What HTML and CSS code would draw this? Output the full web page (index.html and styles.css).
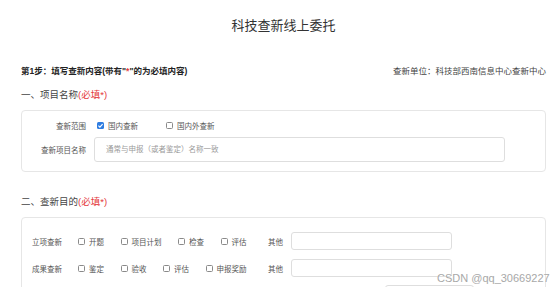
FILE: index.html
```html
<!DOCTYPE html>
<html lang="zh-CN">
<head>
  <meta charset="UTF-8" />
  <meta name="viewport" content="width=device-width, initial-scale=1.0"/>
  <title>科技查新线上委托</title>
  <link rel="stylesheet" href="styles.css">
</head>
<body>
  <div class="page">
    <h1>科技查新线上委托</h1>

    <div class="step">
      <span class="step-title">第1步：填写查新内容(带有"<em>*</em>"的为必填内容)</span>
      <span class="unit">查新单位：科技部西南信息中心查新中心</span>
    </div>

    <h2>一、项目名称<em>(必填*)</em></h2>
    <div class="card card-name">
      <div class="row">
        <span class="label">查新范围</span>
        <div class="choices">
          <label class="opt"><span class="box checked"><svg viewBox="0 0 8 8" width="7" height="7"><path d="M1.6 4.2 L3.3 5.8 L6.4 2.4" fill="none" stroke="#fff" stroke-width="1.3"/></svg></span>国内查新</label>
          <label class="opt"><span class="box"></span>国内外查新</label>
        </div>
      </div>
      <div class="row">
        <span class="label">查新项目名称</span>
        <input class="field wide" type="text" placeholder="通常与申报（或者鉴定）名称一致" />
      </div>
    </div>

    <h2>二、查新目的<em>(必填*)</em></h2>
    <div class="card card-purpose">
      <div class="prow">
        <span class="plabel">立项查新</span>
        <div class="opts">
          <label class="opt"><span class="box"></span>开题</label>
          <label class="opt"><span class="box"></span>项目计划</label>
          <label class="opt"><span class="box"></span>检查</label>
          <label class="opt"><span class="box"></span>评估</label>
        </div>
        <span class="other">其他</span>
        <input class="field small" type="text" />
      </div>
      <div class="prow">
        <span class="plabel">成果查新</span>
        <div class="opts">
          <label class="opt"><span class="box"></span>鉴定</label>
          <label class="opt"><span class="box"></span>验收</label>
          <label class="opt"><span class="box"></span>评估</label>
          <label class="opt"><span class="box"></span>申报奖励</label>
        </div>
        <span class="other">其他</span>
        <input class="field small" type="text" />
      </div>
      <div class="prow extra">
        <input class="field short" type="text" />
      </div>
    </div>
  </div>

  <div class="watermark">CSDN @qq_30669227</div>
</body>
</html>
```

FILE: styles.css
```css
body {
  margin: 0;
  background: #fff;
  color: #333;
  font-family: "Liberation Sans", "Noto Sans CJK SC", sans-serif;
}
.page {
  width: 525px;
  margin-left: 21px;
}
h1 {
  margin: 16px 0 0;
  font-size: 13px;
  line-height: 20px;
  font-weight: normal;
  text-align: center;
  color: #333;
}
.step {
  display: flex;
  justify-content: space-between;
  margin-top: 29px;
  font-size: 8.5px;
  line-height: 12px;
}
.step-title {
  font-weight: bold;
  color: #222;
}
.step em, h2 em {
  font-style: normal;
  color: #e4393c;
}
.unit {
  color: #444;
}
h2 {
  margin: 11px 0 0;
  font-size: 9.5px;
  line-height: 14px;
  font-weight: normal;
  color: #444;
}
.card {
  margin-top: 8px;
  border: 1px solid #e6e6e6;
  border-radius: 4px;
  font-size: 7.5px;
  color: #555;
}
.card-name {
  padding: 7px 0 9px;
}
.card-name + h2 {
  margin-top: 23px;
}
.row {
  display: flex;
  align-items: center;
  height: 14px;
}
.row + .row {
  margin-top: 5px;
  height: 25px;
}
.label {
  width: 64px;
  margin-right: 8px;
  text-align: right;
}
.choices {
  display: flex;
  padding-left: 3px;
}
.opt {
  display: flex;
  align-items: center;
}
.choices .opt {
  margin-right: 28px;
}
.box {
  display: inline-flex;
  align-items: center;
  justify-content: center;
  width: 5px;
  height: 5px;
  margin-right: 4px;
  border: 1px solid #8a8a8a;
  border-radius: 1.5px;
  background: #fff;
}
.box.checked {
  width: 7px;
  height: 7px;
  border: none;
  background: #2f7de1;
}
.field {
  box-sizing: border-box;
  border: 1px solid #dedede;
  border-radius: 3px;
  background: #fff;
  font-family: inherit;
  font-size: 7.5px;
  color: #333;
  outline: none;
}
.field::placeholder {
  color: #9a9a9a;
}
.wide {
  width: 411px;
  height: 25px;
  padding: 0 11px;
}
.card-purpose {
  padding: 14px 0 0 10px;
  height: 80px;
}
.prow {
  display: flex;
  align-items: center;
  height: 18px;
}
.prow + .prow {
  margin-top: 9px;
}
.prow.extra {
  margin-top: 8px;
}
.plabel {
  width: 30px;
  margin-right: 16px;
}
.opts {
  display: flex;
  width: 190px;
}
.opts .opt {
  margin-right: 16.5px;
}
.other {
  margin-right: 8px;
}
.small {
  width: 161px;
  height: 18px;
}
.extra {
  padding-left: 353px;
}
.short {
  width: 89px;
  height: 18px;
}
.watermark {
  position: absolute;
  left: 437px;
  top: 271px;
  font-family: "Liberation Sans", sans-serif;
  font-size: 11px;
  line-height: 14px;
  color: #a8a8a8;
  text-shadow: 0 0 1px #fff;
}
```
